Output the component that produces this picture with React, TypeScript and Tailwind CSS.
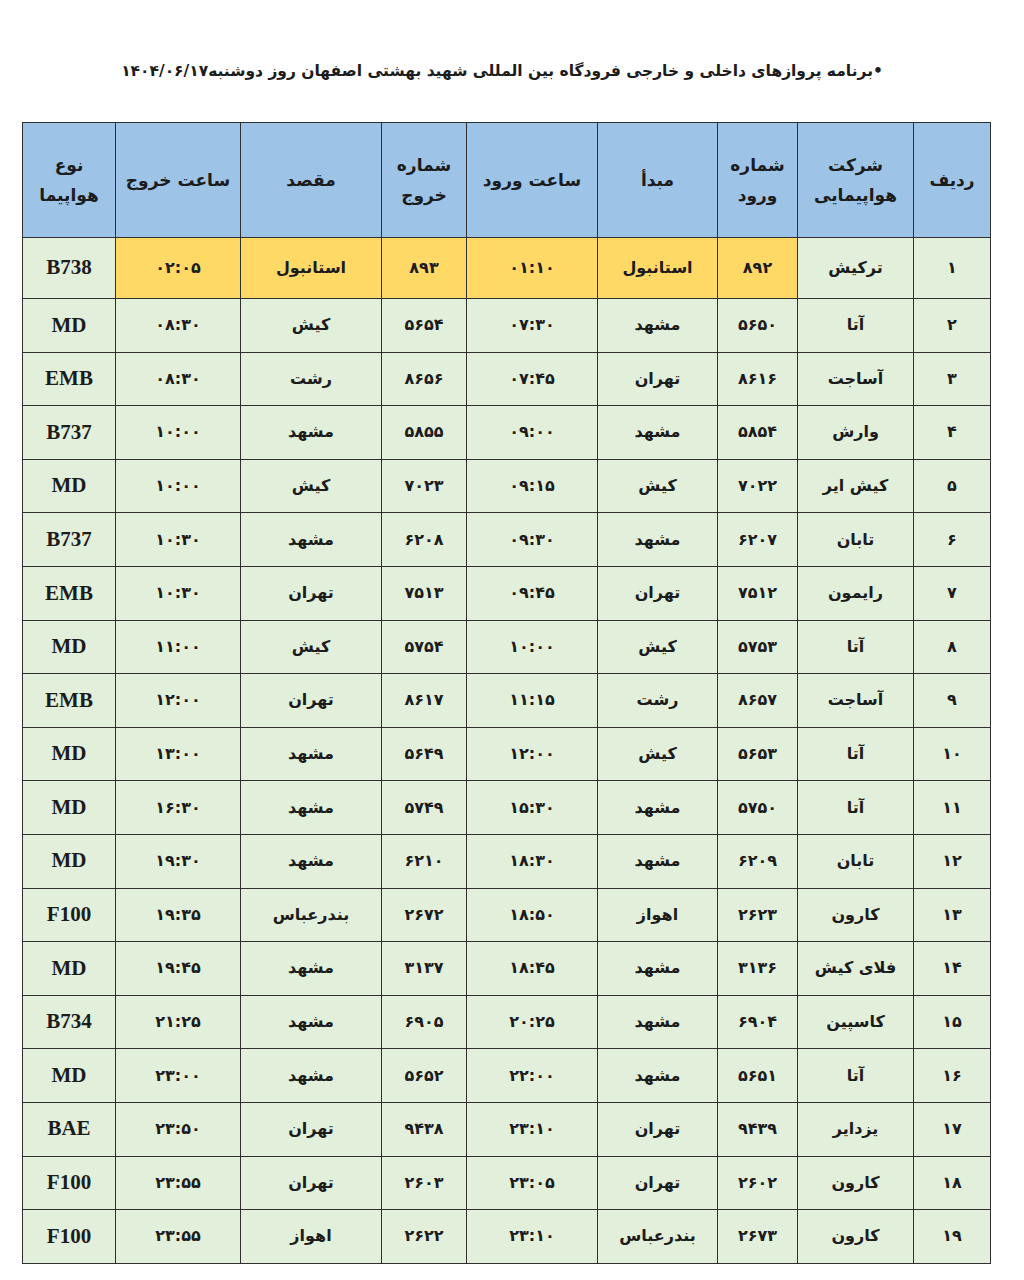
const fa = '"DejaVu Sans", "Noto Sans", sans-serif'

type Row = [string, string, string, string, string, string, string, string, string]

const headers = [
  ['ردیف'],
  ['شرکت', 'هواپیمایی'],
  ['شماره', 'ورود'],
  ['مبدأ'],
  ['ساعت ورود'],
  ['شماره', 'خروج'],
  ['مقصد'],
  ['ساعت خروج'],
  ['نوع', 'هواپیما'],
]

const widths = ['w-[77px]', 'w-[116px]', 'w-[80px]', 'w-[120px]', 'w-[131px]', 'w-[85px]', 'w-[141px]', 'w-[125px]', 'w-[93px]']

const rows: Row[] = [
  ['۱', 'ترکیش', '۸۹۲', 'استانبول', '۰۱:۱۰', '۸۹۳', 'استانبول', '۰۲:۰۵', 'B738'],
  ['۲', 'آتا', '۵۶۵۰', 'مشهد', '۰۷:۳۰', '۵۶۵۴', 'کیش', '۰۸:۳۰', 'MD'],
  ['۳', 'آساجت', '۸۶۱۶', 'تهران', '۰۷:۴۵', '۸۶۵۶', 'رشت', '۰۸:۳۰', 'EMB'],
  ['۴', 'وارش', '۵۸۵۴', 'مشهد', '۰۹:۰۰', '۵۸۵۵', 'مشهد', '۱۰:۰۰', 'B737'],
  ['۵', 'کیش ایر', '۷۰۲۲', 'کیش', '۰۹:۱۵', '۷۰۲۳', 'کیش', '۱۰:۰۰', 'MD'],
  ['۶', 'تابان', '۶۲۰۷', 'مشهد', '۰۹:۳۰', '۶۲۰۸', 'مشهد', '۱۰:۳۰', 'B737'],
  ['۷', 'رایمون', '۷۵۱۲', 'تهران', '۰۹:۴۵', '۷۵۱۳', 'تهران', '۱۰:۳۰', 'EMB'],
  ['۸', 'آتا', '۵۷۵۳', 'کیش', '۱۰:۰۰', '۵۷۵۴', 'کیش', '۱۱:۰۰', 'MD'],
  ['۹', 'آساجت', '۸۶۵۷', 'رشت', '۱۱:۱۵', '۸۶۱۷', 'تهران', '۱۲:۰۰', 'EMB'],
  ['۱۰', 'آتا', '۵۶۵۳', 'کیش', '۱۲:۰۰', '۵۶۴۹', 'مشهد', '۱۳:۰۰', 'MD'],
  ['۱۱', 'آتا', '۵۷۵۰', 'مشهد', '۱۵:۳۰', '۵۷۴۹', 'مشهد', '۱۶:۳۰', 'MD'],
  ['۱۲', 'تابان', '۶۲۰۹', 'مشهد', '۱۸:۳۰', '۶۲۱۰', 'مشهد', '۱۹:۳۰', 'MD'],
  ['۱۳', 'کارون', '۲۶۲۳', 'اهواز', '۱۸:۵۰', '۲۶۷۲', 'بندرعباس', '۱۹:۳۵', 'F100'],
  ['۱۴', 'فلای کیش', '۳۱۳۶', 'مشهد', '۱۸:۴۵', '۳۱۳۷', 'مشهد', '۱۹:۴۵', 'MD'],
  ['۱۵', 'کاسپین', '۶۹۰۴', 'مشهد', '۲۰:۲۵', '۶۹۰۵', 'مشهد', '۲۱:۲۵', 'B734'],
  ['۱۶', 'آتا', '۵۶۵۱', 'مشهد', '۲۲:۰۰', '۵۶۵۲', 'مشهد', '۲۳:۰۰', 'MD'],
  ['۱۷', 'یزدایر', '۹۴۳۹', 'تهران', '۲۳:۱۰', '۹۴۳۸', 'تهران', '۲۳:۵۰', 'BAE'],
  ['۱۸', 'کارون', '۲۶۰۲', 'تهران', '۲۳:۰۵', '۲۶۰۳', 'تهران', '۲۳:۵۵', 'F100'],
  ['۱۹', 'کارون', '۲۶۷۳', 'بندرعباس', '۲۳:۱۰', '۲۶۲۲', 'اهواز', '۲۳:۵۵', 'F100'],
]

export default function App() {
  return (
    <div className="w-[1024px] min-h-[1280px] bg-white text-[#1c1c1c]" style={{ fontFamily: fa }}>
      <h1 dir="rtl" className="pt-[57px] pb-[37px] pr-[20px] text-center text-[15.5px] font-bold leading-[28px]">
        •برنامه پروازهای داخلی و خارجی فرودگاه بین المللی شهید بهشتی اصفهان روز  دوشنبه۱۴۰۴/۰۶/۱۷
      </h1>

      <table dir="rtl" className="ml-[22px] w-[968px] table-fixed border-collapse border-[1.5px] border-[#2f2f2f]">
        <thead>
          <tr className="h-[115px] bg-[#9dc3e6]">
            {headers.map((h, i) => (
              <th
                key={i}
                className={`${widths[i]} border-[1.5px] border-[#2f2f2f] text-center align-middle text-[17px] font-bold leading-[30px]`}
              >
                {h.map((line) => (
                  <div key={line}>{line}</div>
                ))}
              </th>
            ))}
          </tr>
        </thead>
        <tbody>
          {rows.map((r, ri) => (
            <tr key={ri} className={ri === 0 ? 'h-[61px]' : 'h-[53.6px]'}>
              {r.map((c, ci) => {
                const yellow = ri === 0 && ci >= 2 && ci <= 7
                const latin = ci === 8
                return (
                  <td
                    key={ci}
                    className={`border-[1.5px] border-[#2f2f2f] text-center align-middle font-bold ${
                      yellow ? 'bg-[#ffd966]' : 'bg-[#e2efda]'
                    } ${latin ? 'text-[21px]' : 'text-[16px]'}`}
                    style={latin ? { fontFamily: '"Liberation Serif", serif' } : undefined}
                  >
                    {c}
                  </td>
                )
              })}
            </tr>
          ))}
        </tbody>
      </table>
    </div>
  )
}
